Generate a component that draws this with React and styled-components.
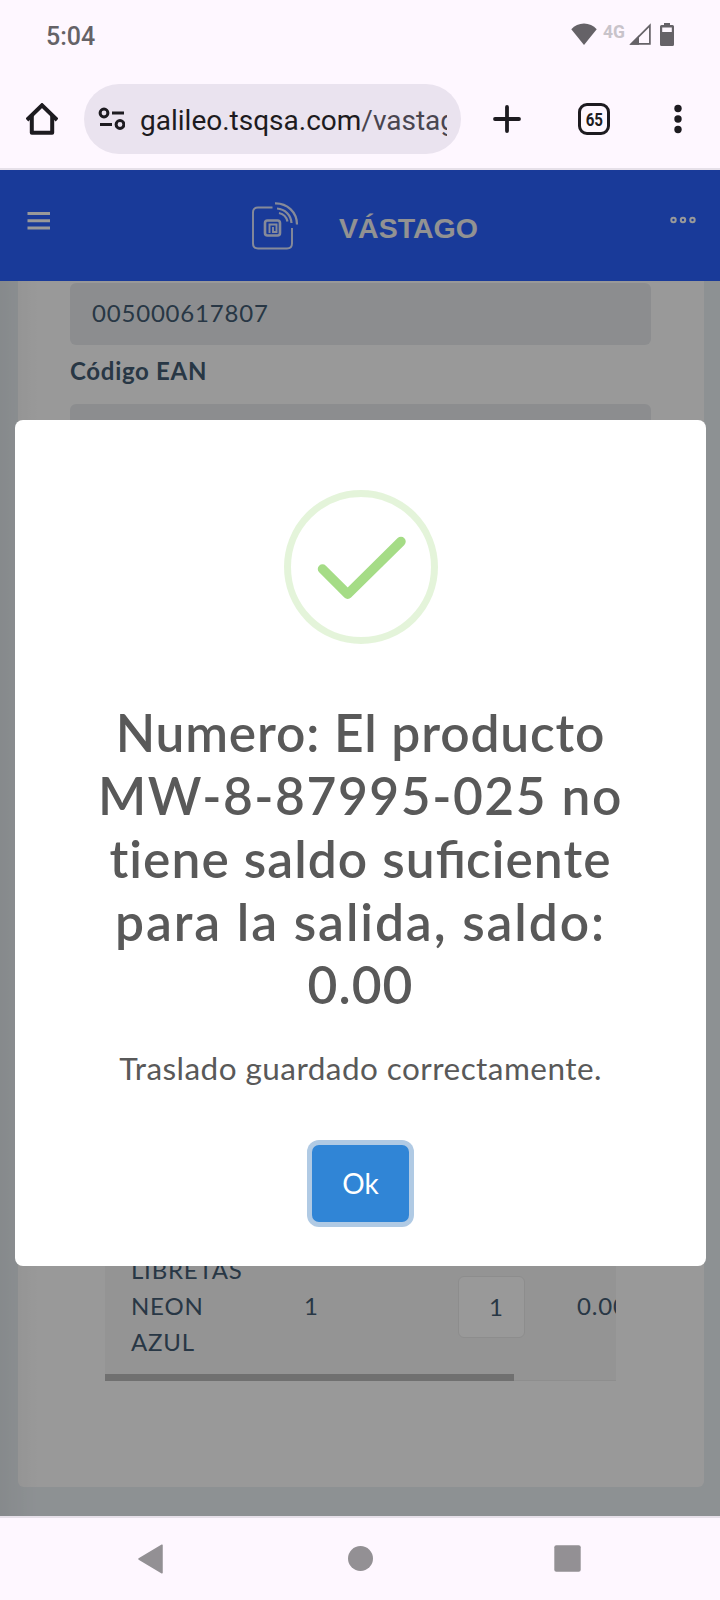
import styled, { createGlobalStyle } from "styled-components";

const titleLines = [
    { id: "numero", text: "Numero: El producto", spacing: 0.85 },
    { id: "codigo", text: "MW-8-87995-025 no", spacing: 1.55 },
    { id: "saldo", text: <>tiene saldo su<Ligature>fi</Ligature>ciente</>, spacing: 1.05 },
    { id: "salida", text: "para la salida, saldo:", spacing: 1.9 },
    { id: "total", text: "0.00", spacing: 1 },
];

export default function App() {
    return (
        <Screen>
            <GlobalStyle />
            <StatusBar />
            <BrowserBar />
            <Viewport>
                <AppHeader />
                <PageBody>
                    <Card>
                        <ReadOnlyInput>005000617807</ReadOnlyInput>
                        <Label>Código EAN</Label>
                        <ReadOnlyInput />
                        <ProductTable />
                    </Card>
                </PageBody>
                <SideShadow />
                <Backdrop>
                    <SuccessAlert />
                </Backdrop>
            </Viewport>
            <NavigationBar />
        </Screen>
    );
}

// letter-spacing turns ligatures off, so the pair is set without it
function Ligature({ children }) {
    return <LigaturePair>{children}</LigaturePair>;
}

function StatusBar() {
    return (
        <StatusRow>
            <Clock>5:04</Clock>
            <StatusIcons>
                <svg width="26" height="22" viewBox="0 0 26 22">
                    <path d="M13 22 L0.3 6.2 C3.5 2.5 8 0.4 13 0.4 S22.5 2.5 25.7 6.2 Z" fill="#656267" />
                </svg>
                <Network>4G</Network>
                <svg width="22" height="22" viewBox="0 0 22 22">
                    <path d="M20.900 2.400 V20.900 H2.400 Z" fill="none" stroke="#656267" strokeWidth="1.700" />
                    <path d="M0.500 21.700 L10 12.200 V21.700 Z" fill="#656267" />
                </svg>
                <svg width="14" height="23" viewBox="0 0 14 23">
                    <path d="M4 0 H10 V2 H12.500 Q14 2 14 3.500 V21.500 Q14 23 12.500 23 H1.500 Q0 23 0 21.500 V3.500 Q0 2 1.500 2 H4 Z M2.200 4.500 V9 H11.800 V4.500 Z" fill="#656267" fillRule="evenodd" />
                </svg>
            </StatusIcons>
        </StatusRow>
    );
}

function BrowserBar() {
    return (
        <BrowserRow>
            <svg width="32" height="32" viewBox="0 0 32 32" fill="none" stroke="#1d1b20" strokeWidth="4" strokeLinejoin="round">
                <path d="M0.900 17 L16 2.300 L31.100 17" strokeLinejoin="miter" />
                <path d="M5.800 13 V29.700 H26.200 V13" />
            </svg>
            <AddressBar>
                <svg width="27" height="24" viewBox="0 0 27 24" fill="none" stroke="#1d1b20" strokeWidth="3">
                    <circle cx="6" cy="6" r="3.900" />
                    <path d="M14 6 H26 M2 17.500 H14" strokeWidth="2.800" />
                    <circle cx="22" cy="17.500" r="3.900" />
                </svg>
                <Url>
                    galileo.tsqsa.com<UrlPath>/vastago</UrlPath>
                </Url>
            </AddressBar>
            <svg width="28" height="28" viewBox="0 0 28 28" stroke="#1d1b20" strokeWidth="3.800" strokeLinecap="round">
                <path d="M14 2 V26 M2 14 H26" />
            </svg>
            <TabCount>
                <TabNumber>65</TabNumber>
            </TabCount>
            <svg width="8" height="30" viewBox="0 0 8 30" fill="#1d1b20">
                <circle cx="4" cy="4.500" r="3.700" />
                <circle cx="4" cy="15" r="3.700" />
                <circle cx="4" cy="25.500" r="3.700" />
            </svg>
        </BrowserRow>
    );
}

function AppHeader() {
    return (
        <Header>
            <svg width="24" height="20" viewBox="0 0 24 20" fill="#fff">
                <path d="M0.500 1 H23 V4 H0.500 Z M0.500 8.300 H23 V11.300 H0.500 Z M0.500 15.600 H23 V18.600 H0.500 Z" />
            </svg>
            <Brand>
                <svg width="48" height="50" viewBox="0 0 48 50" fill="none" stroke="#fff" strokeWidth="1.900" opacity="0.85">
                    <path d="M21.500 6.500 H7 Q2 6.500 2 11.500 V42.500 Q2 47.500 7 47.500 H36 Q41 47.500 41 42.500 V27" />
                    <path d="M24 2.300 C36 2 46 11 46 23.500 M26 7.500 C34 8 40 14 40.500 22 M28 12 C32.500 13 35.500 16 36.500 20.500" strokeWidth="2.200" />
                    <rect x="14" y="19.500" width="15" height="15" rx="2.500" strokeWidth="2.600" />
                    <path d="M18.500 32 V23.500 H25.500 V31 H22 V26" strokeWidth="1.900" />
                </svg>
                <BrandName>VÁSTAGO</BrandName>
            </Brand>
            <svg width="26" height="8" viewBox="0 0 26 8" fill="none" stroke="#fff" strokeWidth="2">
                <circle cx="3.500" cy="4" r="2.200" />
                <circle cx="13" cy="4" r="2.200" />
                <circle cx="22.500" cy="4" r="2.200" />
            </svg>
        </Header>
    );
}

function ProductTable() {
    return (
        <TableWrapper>
            <ProductRow>
                <ProductName>
                    <span>LIBRETAS</span>
                    <span>NEON</span>
                    <span>AZUL</span>
                </ProductName>
                <Stock>1</Stock>
                <QuantityInput>1</QuantityInput>
                <Price>0.00</Price>
            </ProductRow>
            <ScrollTrack>
                <ScrollThumb />
            </ScrollTrack>
        </TableWrapper>
    );
}

function SuccessAlert() {
    return (
        <Popup>
            <SuccessIcon viewBox="0 0 154 154" fill="none">
                <circle cx="77" cy="77" r="73.500" stroke="#a5dc86" strokeOpacity="0.3" strokeWidth="7" />
                <path d="M38.500 79 L63.700 104.200 L117 51.500" stroke="#a5dc86" strokeWidth="9.500" strokeLinecap="round" strokeLinejoin="round" />
            </SuccessIcon>
            <Title>
                {titleLines.map((line) => (
                    <TitleLine key={line.id} $spacing={line.spacing}>{line.text}</TitleLine>
                ))}
            </Title>
            <Message>Traslado guardado correctamente.</Message>
            <ConfirmButton>Ok</ConfirmButton>
        </Popup>
    );
}

function NavigationBar() {
    return (
        <NavRow>
            <svg width="27" height="30" viewBox="0 0 27 30" fill="#939094">
                <path d="M25 1.200 V28.800 L2 15 Z" stroke="#939094" strokeLinejoin="round" strokeWidth="1.500" />
            </svg>
            <HomeDot />
            <svg width="27" height="27" viewBox="0 0 27 27" fill="#939094">
                <rect x="0.300" y="0.300" width="26.400" height="26.400" rx="2" />
            </svg>
        </NavRow>
    );
}

const GlobalStyle = createGlobalStyle`
    body {
        margin: 0;
    }
    * {
        box-sizing: border-box;
    }
    svg {
        display: block;
        flex: none;
    }
`;

const Screen = styled.div`
    display: flex;
    flex-direction: column;
    width: 720px;
    height: 1600px;
    overflow: hidden;
    background: #fef7ff;
    font-family: Lato, sans-serif;
`;

const StatusRow = styled.div`
    display: flex;
    justify-content: space-between;
    align-items: flex-start;
    height: 84px;
    padding: 23px 46px 0 46px;
    font-family: Roboto, sans-serif;
`;

const Clock = styled.span`
    font-size: 25px;
    line-height: 27px;
    font-weight: 500;
    color: #656267;
`;

const StatusIcons = styled.div`
    display: flex;
    align-items: flex-start;
`;

const Network = styled.span`
    width: 32px;
    padding-left: 6px;
    font-size: 17.5px;
    line-height: 19px;
    font-weight: 700;
    color: #c8c3ca;

    & + svg {
        margin-right: 9px;
    }
`;

const BrowserRow = styled.div`
    display: flex;
    align-items: center;
    height: 86px;
    padding: 0 38px 14px 26px;
    border-bottom: 2px solid #e6e0e9;
    font-family: Roboto, sans-serif;
`;

const AddressBar = styled.div`
    display: flex;
    align-items: center;
    width: 377px;
    height: 70px;
    margin: 0 32px 0 26px;
    padding: 0 14px;
    border-radius: 35px;
    background: #eae3ef;
`;

const Url = styled.div`
    flex: 1;
    margin: 3px 0 0 15px;
    overflow: hidden;
    white-space: nowrap;
    font-size: 28px;
    line-height: 40px;
    color: #1d1b20;
`;

const UrlPath = styled.span`
    color: #49454f;
`;

const TabCount = styled.div`
    display: flex;
    align-items: center;
    justify-content: center;
    width: 32px;
    height: 32px;
    margin: 0 auto 0 57px;
    border: 3.5px solid #1d1b20;
    border-radius: 9px;
`;

const TabNumber = styled.span`
    font-size: 18px;
    font-weight: 700;
    color: #1d1b20;
    transform: scaleX(0.84);
`;

const Viewport = styled.main`
    position: relative;
    height: 1346px;
    overflow: hidden;
    background: #ecf2f6;
    color: #435c73;
`;

const Header = styled.header`
    display: flex;
    justify-content: space-between;
    height: 111px;
    padding: 41px 24px 0 27px;
    background: #2b62ff;

    & > svg:last-child {
        margin-top: 5px;
    }
`;

const Brand = styled.div`
    display: flex;
    gap: 40px;
    margin-top: -10px;
    margin-left: 8px;
`;

const BrandName = styled.span`
    margin-top: 11px;
    font-family: "Liberation Sans", sans-serif;
    font-size: 28.5px;
    line-height: 32px;
    font-weight: 700;
    color: #f4f4f4;
`;

const PageBody = styled.div`
    padding: 0 16px 0 18px;
`;

const Card = styled.section`
    height: 1206px;
    padding: 2px 53px 0 52px;
    border-radius: 0 0 6px 6px;
    background: #fff;
`;

const ReadOnlyInput = styled.div`
    height: 62px;
    padding: 0 22px;
    border-radius: 6px;
    background: #e9ecef;
    font-size: 24px;
    line-height: 60px;
    letter-spacing: 0.8px;
`;

const Label = styled.div`
    height: 59px;
    font-size: 24px;
    line-height: 51px;
    font-weight: 700;
    letter-spacing: 0.7px;
`;

const TableWrapper = styled.div`
    width: 511px;
    margin: 750px 0 0 35px;
    overflow: hidden;
`;

const ProductRow = styled.div`
    display: flex;
    align-items: flex-start;
    height: 158px;
    background: #f7f7f7;
    font-size: 24px;
    line-height: 36px;

    & > * {
        flex: none;
    }
`;

const ProductName = styled.div`
    display: flex;
    flex-direction: column;
    width: 199px;
    padding: 36px 0 0 26px;
    letter-spacing: 0.8px;
`;

const Stock = styled.div`
    width: 154px;
    padding-top: 72px;
`;

const QuantityInput = styled.div`
    width: 67px;
    height: 62px;
    margin-top: 60px;
    padding-right: 21px;
    border: 1px solid #ebebeb;
    border-radius: 6px;
    background: #fff;
    line-height: 60px;
    text-align: right;
`;

const Price = styled.div`
    padding: 72px 0 0 52px;
    letter-spacing: 0.8px;
`;

const ScrollTrack = styled.div`
    height: 7px;
    background: #f7f7f7;
    border-bottom: 1px solid #ededed;
`;

const ScrollThumb = styled.div`
    width: 409px;
    height: 7px;
    background: #bbb;
`;

const SideShadow = styled.div`
    position: absolute;
    top: 111px;
    bottom: 0;
    left: 0;
    width: 38px;
    background: linear-gradient(to right, rgba(0, 0, 0, 0.05), rgba(0, 0, 0, 0));
`;

const Backdrop = styled.div`
    position: absolute;
    inset: 0;
    padding: 250px 14px 0 15px;
    background: rgba(0, 0, 0, 0.4);
`;

const Popup = styled.div`
    display: flex;
    flex-direction: column;
    align-items: center;
    height: 846px;
    padding-top: 70px;
    border-radius: 8px;
    background: #fff;
    color: #595959;
`;

const SuccessIcon = styled.svg`
    width: 154px;
    height: 154px;
`;

const Title = styled.h2`
    display: flex;
    flex-direction: column;
    align-items: center;
    margin: 57px 0 0;
    font-size: 51.5px;
    line-height: 63px;
    font-weight: 600;
`;

const TitleLine = styled.span`
    white-space: nowrap;
    letter-spacing: ${(props) => props.$spacing}px;
`;

const LigaturePair = styled.span`
    letter-spacing: 0;
`;

const Message = styled.p`
    margin: 30px 0 0;
    font-size: 31.5px;
    line-height: 44px;
    letter-spacing: 0.45px;
`;

const ConfirmButton = styled.button`
    width: 97px;
    height: 77px;
    margin-top: 55px;
    padding: 0 0 2px;
    border: 0;
    border-radius: 7px;
    background: #3085d6;
    box-shadow: 0 0 0 5px #b0cae4;
    color: #fff;
    font-family: inherit;
    font-size: 28px;
`;

const NavRow = styled.nav`
    display: flex;
    justify-content: space-between;
    align-items: center;
    height: 84px;
    padding: 0 139px 1px 137px;
    border-top: 2px solid #e6e0e9;
`;

const HomeDot = styled.div`
    width: 25px;
    height: 25px;
    margin-left: 3px;
    border-radius: 50%;
    background: #939094;
`;
